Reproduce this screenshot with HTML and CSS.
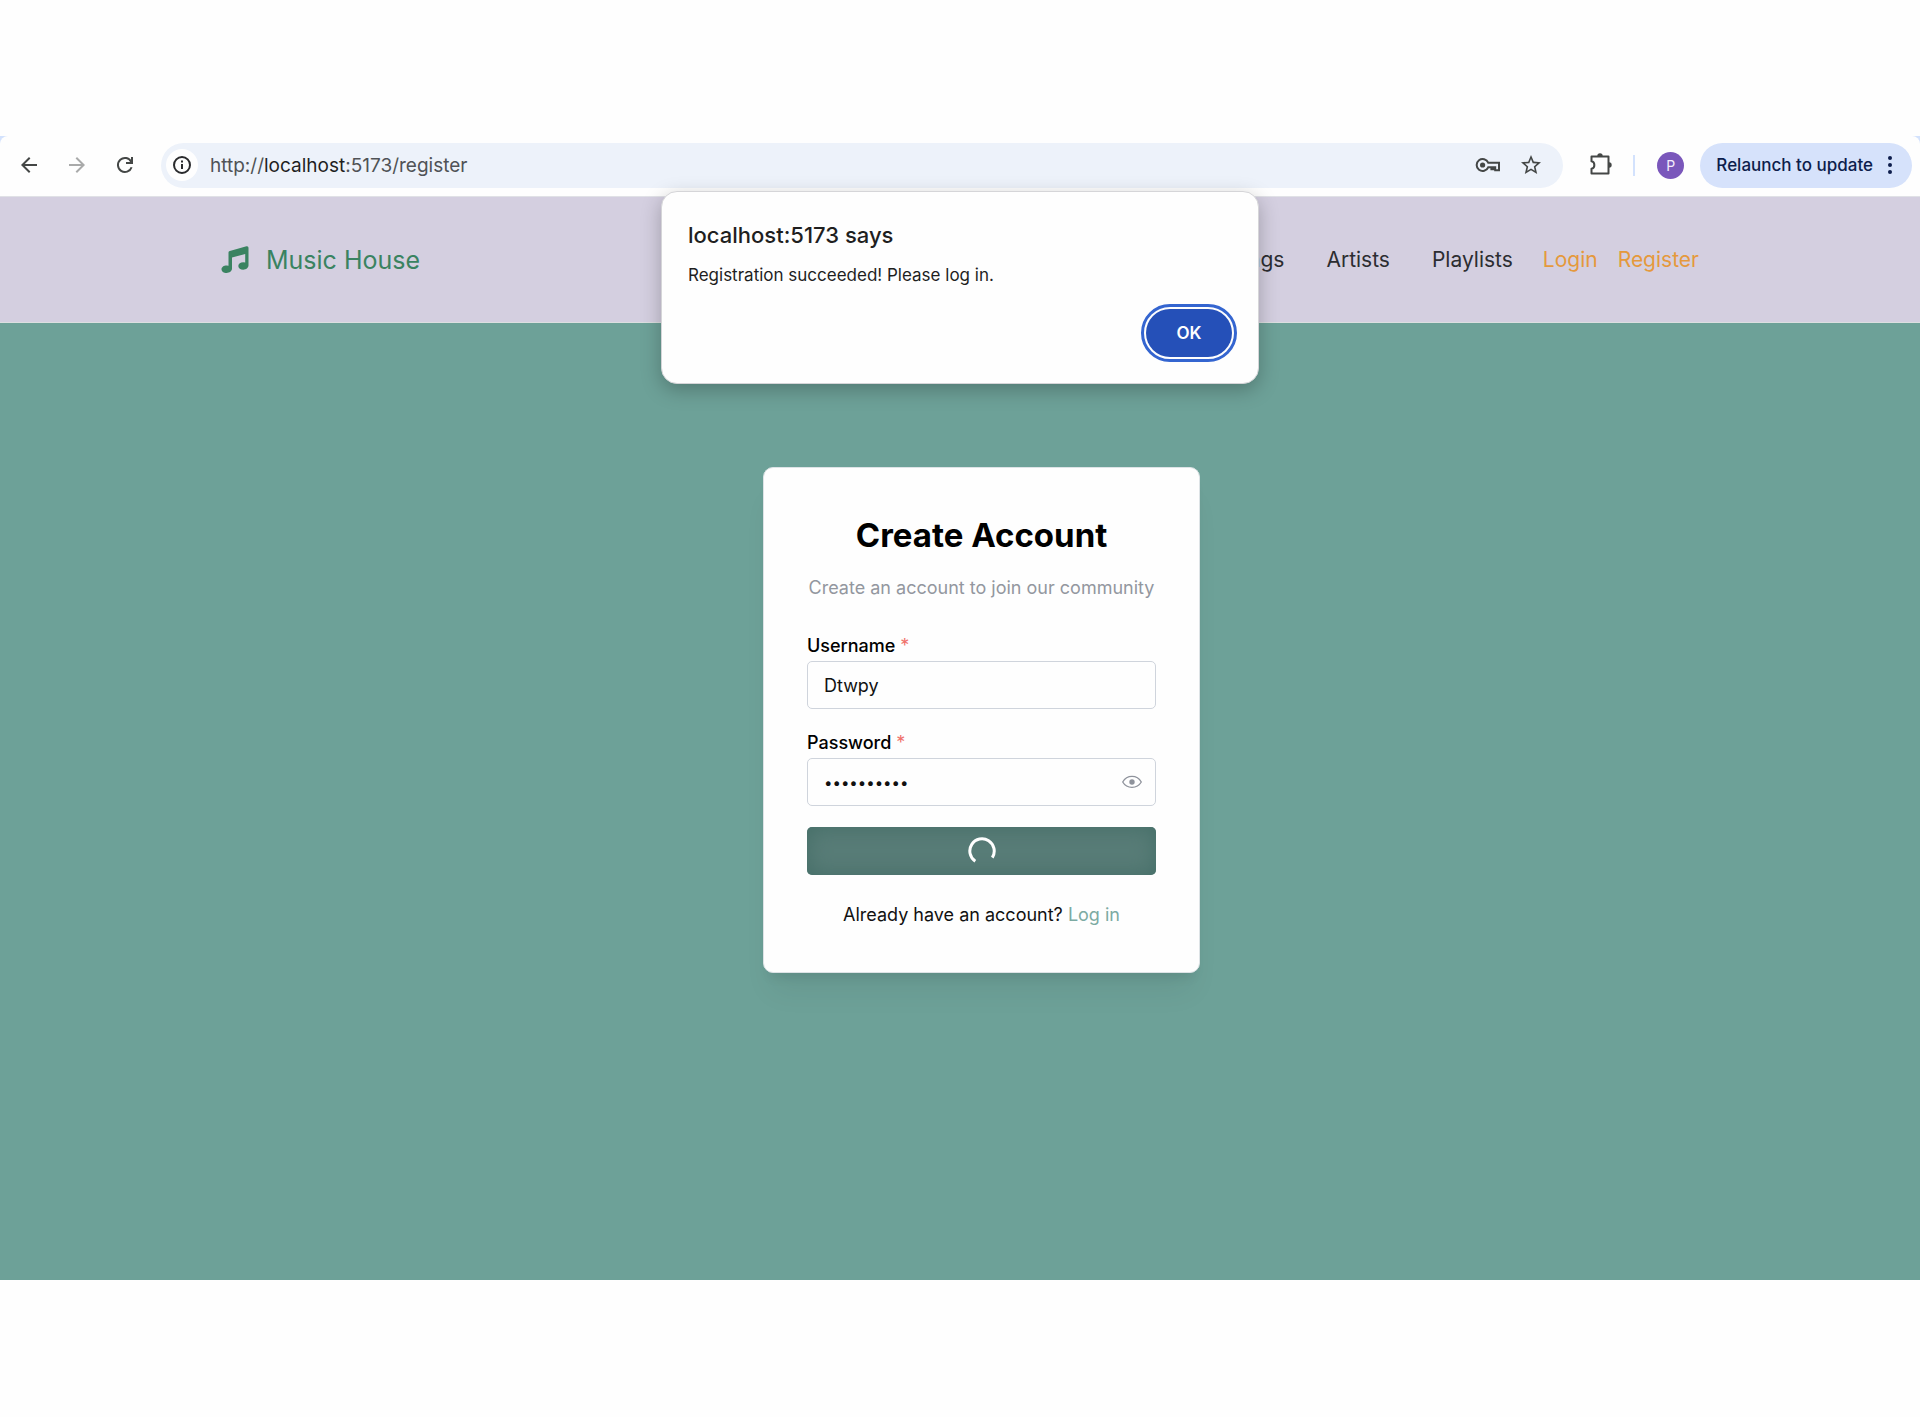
FILE: index.html
```html
<!DOCTYPE html>
<html lang="en">
<head>
    <meta charset="UTF-8">
    <meta name="viewport" content="width=device-width, initial-scale=1.0">
    <title>Register | Music House</title>
    <link rel="stylesheet" href="styles.css">
</head>
<body>

    <div class="browser">
        <!-- Browser toolbar -->
        <div class="toolbar">
            <button class="tool-btn" aria-label="Back">
                <svg width="24" height="24" viewBox="0 0 24 24" fill="currentColor"><path d="M20 11H7.83l5.59-5.59L12 4l-8 8 8 8 1.41-1.41L7.83 13H20v-2z"/></svg>
            </button>
            <button class="tool-btn forward" aria-label="Forward">
                <svg width="24" height="24" viewBox="0 0 24 24" fill="currentColor"><path d="M12 4l-1.41 1.41L16.17 11H4v2h12.17l-5.58 5.59L12 20l8-8z"/></svg>
            </button>
            <button class="tool-btn" aria-label="Reload">
                <svg width="24" height="24" viewBox="0 0 24 24" fill="none" stroke="currentColor" stroke-width="2"><path d="M18.6 14.2A7 7 0 1 1 18.2 8.8L19 10"/><path d="M19 4v6h-6"/></svg>
            </button>

            <div class="address">
                <button class="site-info" aria-label="Site information">
                    <svg width="20" height="20" viewBox="0 0 20 20" fill="none" stroke="currentColor" stroke-width="2"><circle cx="10" cy="10" r="8"/><path d="M10 9v5M10 5.6v2"/></svg>
                </button>
                <span class="url">http://<b>localhost</b>:5173/register</span>
                <button class="address-btn" aria-label="Passwords">
                    <svg width="26" height="18" viewBox="0 0 26 18" fill="none" stroke="currentColor" stroke-width="2"><path d="M13.2 6.7A6 6 0 1 0 13.2 11.3H16.4V13.2H18.4V11.3H20.2V14.3H24V6.7Z"/><circle cx="7.6" cy="9" r="2.6" fill="currentColor" stroke="none"/></svg>
                </button>
                <button class="address-btn" aria-label="Bookmark this tab">
                    <svg width="24" height="24" viewBox="0 0 24 24" fill="currentColor"><path d="M22 9.24l-7.19-.62L12 2 9.19 8.63 2 9.24l5.46 4.73L5.82 21 12 17.27 18.18 21l-1.63-7.03L22 9.24zM12 15.4l-3.76 2.27 1-4.28-3.32-2.88 4.38-.38L12 6.1l1.71 4.04 4.38.38-3.32 2.88 1 4.28L12 15.4z"/></svg>
                </button>
            </div>

            <button class="tool-btn extensions" aria-label="Extensions">
                <svg width="24" height="24" viewBox="0 0 24 24"><path d="M2.500 3.500H19.500V20.500H2.500V15.800C6.300 15.300 6.300 8.700 2.500 8.200Z" fill="none" stroke="currentColor" stroke-width="2" stroke-linejoin="round"/><path d="M8.300 3A2.700 2.700 0 0 1 13.700 3ZM20 9.300A2.700 2.700 0 0 1 20 14.700Z" fill="currentColor"/></svg>
            </button>
            <span class="divider"></span>
            <button class="profile" aria-label="Profile">P</button>
            <button class="relaunch">
                Relaunch to update
                <svg width="6" height="20" viewBox="0 0 6 20" fill="currentColor"><circle cx="3" cy="3" r="2"/><circle cx="3" cy="10" r="2"/><circle cx="3" cy="17" r="2"/></svg>
            </button>
        </div>

        <!-- Navbar -->
        <header class="navbar">
            <a href="#" class="brand">
                <svg width="28" height="28" viewBox="0 0 28 28" fill="currentColor"><path d="M25.500 0.300Q27.500 0 27.500 1.800V19.300C27.500 22 25 23.700 22.300 23.700C19.500 23.700 17.300 22.100 17.300 20C17.300 17.800 19.500 16.200 22.300 16.200Q23.300 16.200 24.200 16.500V8L11 11.600V22.600C11 25.300 8.500 27 5.600 27C2.800 27 .5 25.400 .5 23.200C.5 21 2.800 19.400 5.600 19.400Q6.700 19.400 7.500 19.700V6.600Q7.500 5.400 8.800 5Z"/></svg>
                <span>Music House</span>
            </a>
            <nav class="nav-links">
                <a href="#">Songs</a>
                <a href="#">Artists</a>
                <a href="#">Playlists</a>
            </nav>
            <div class="auth-links">
                <a href="#">Login</a>
                <a href="#">Register</a>
            </div>
        </header>

        <!-- Register form -->
        <main class="page">
            <form class="card">
                <h1>Create Account</h1>
                <p class="subtitle">Create an account to join our community</p>

                <label for="username">Username <span class="required">*</span></label>
                <div class="input-group">
                    <input type="text" id="username" value="Dtwpy">
                </div>

                <label for="password">Password <span class="required">*</span></label>
                <div class="input-group">
                    <input type="password" id="password" value="musichouse">
                    <button type="button" class="show-btn" aria-label="Show password">
                        <svg width="20" height="14" viewBox="0 0 20 14" fill="none" stroke="currentColor"><path d="M.7 7C5 -.5 15 -.5 19.300 7C15 14.200 5 14.200 .7 7Z" stroke-width="1.300"/><circle cx="10" cy="7" r="2.700" fill="currentColor" stroke="none"/></svg>
                    </button>
                </div>

                <button type="submit" class="submit-btn" aria-label="Registering" disabled>
                    <svg width="28" height="28" viewBox="0 0 28 28" fill="none" stroke="currentColor" stroke-width="3"><path d="M7.300 24.200A12.200 12.200 0 1 1 24.300 20.600"/></svg>
                </button>

                <p class="login">Already have an account? <a href="#">Log in</a></p>
            </form>
        </main>

        <!-- Alert over the page -->
        <div class="alert" role="alertdialog" aria-labelledby="alertTitle">
            <h2 id="alertTitle">localhost:5173 says</h2>
            <p>Registration succeeded! Please log in.</p>
            <button class="ok-btn">OK</button>
        </div>
    </div>

</body>
</html>
```
FILE: styles.css
```css
* {
    margin: 0;
    padding: 0;
    box-sizing: border-box;
    font-family: 'Inter', sans-serif;
}
body {
    padding: 136px 0;
    background: #fefefe;
}
a {
    text-decoration: none;
}
button {
    display: flex;
    align-items: center;
    justify-content: center;
    border: none;
    background: none;
    cursor: pointer;
}
svg {
    flex-shrink: 0;
}
.browser {
    position: relative;
    background: #d3e2fd;
}

/* Browser toolbar */
.toolbar {
    display: flex;
    align-items: center;
    height: 61px;
    padding: 0 8px 2px 17px;
    background: #fefefe;
    border-bottom: 1px solid #e0e1e6;
    border-radius: 8px 8px 0 0;
}
.tool-btn {
    width: 24px;
    height: 24px;
    margin-right: 24px;
    color: #444746;
}
.tool-btn.forward {
    color: #a9aaaa;
}
.address {
    flex: 1;
    display: flex;
    align-items: center;
    gap: 18px;
    height: 45px;
    padding: 0 20px 0 5px;
    margin-right: 26px;
    background: #edf2fa;
    border-radius: 24px;
}
.site-info {
    width: 32px;
    height: 32px;
    margin-right: -6px;
    background: #fefefe;
    color: #2a2b2d;
    border-radius: 50%;
}
.url {
    flex: 1;
    font-size: 19px;
    color: #505256;
}
.url b {
    font-weight: 400;
    color: #1f1f1f;
}
.address-btn {
    color: #444746;
}
.extensions {
    margin-right: 20px;
}
.divider {
    width: 2px;
    height: 21px;
    background: #d3e2fd;
}
.profile {
    width: 27px;
    height: 27px;
    margin: 0 16px 0 22px;
    background: #7a57bb;
    color: #f3edfb;
    font-size: 14px;
    border-radius: 50%;
}
.relaunch {
    gap: 14px;
    height: 45px;
    padding: 0 19px 0 16px;
    background: #d6e2fb;
    color: #0d1d4c;
    font-size: 17px;
    font-weight: 500;
    border-radius: 24px;
}

/* Navbar */
.navbar {
    display: flex;
    align-items: center;
    height: 126px;
    padding: 0 221px;
    background: #d4cfe0;
    border-bottom: 1px solid #dcdfe0;
}
.brand {
    display: flex;
    align-items: center;
    gap: 17px;
    color: #3a8361;
    font-size: 25px;
}
.nav-links {
    display: flex;
    gap: 42px;
    margin-left: auto;
    font-size: 21px;
}
.nav-links a {
    color: #2c2d31;
}
.auth-links {
    display: flex;
    gap: 20px;
    margin-left: 30px;
    font-size: 21px;
}
.auth-links a {
    color: #e5993c;
}

/* Register form */
.page {
    display: flex;
    justify-content: center;
    padding: 144px 0 307px 43px;
    background: #6da198;
}
.card {
    width: 437px;
    padding: 43px;
    background: #fefefe;
    border: 1px solid #dde3e6;
    border-radius: 10px;
    box-shadow: 0 26px 30px -8px rgba(0,0,0,0.06), 0 10px 12px -6px rgba(0,0,0,0.08);
}
.card h1 {
    font-size: 33px;
    font-weight: 700;
    line-height: 48px;
    text-align: center;
}
.subtitle {
    margin-top: 16px;
    margin-bottom: 32px;
    color: #93979f;
    font-size: 18px;
    line-height: 26px;
    text-align: center;
    white-space: nowrap;
}
.card label {
    display: block;
    font-size: 18px;
    font-weight: 500;
    line-height: 26px;
}
.required {
    color: #f0716b;
    font-weight: 400;
}
.input-group {
    position: relative;
    margin-top: 2px;
    margin-bottom: 21px;
}
.input-group input {
    display: block;
    width: 100%;
    height: 48px;
    padding: 0 16px;
    background: #fefefe;
    border: 1px solid #cfd4dc;
    border-radius: 5px;
    color: #111;
    font-size: 18px;
}
.input-group input[type="password"] {
    font-size: 15px;
}
.show-btn {
    position: absolute;
    top: 0;
    right: 14px;
    height: 48px;
    color: #8e929b;
}
.submit-btn {
    width: 100%;
    height: 48px;
    background: #587c77;
    color: #fefefe;
    border-radius: 5px;
    box-shadow: inset 0 0 22px #446e67;
}
.login {
    margin-top: 26px;
    color: #111;
    font-size: 18px;
    line-height: 28px;
    text-align: center;
}
.login a {
    color: #7caaa2;
}

/* Alert */
.alert {
    position: absolute;
    top: 55px;
    left: 50%;
    width: 598px;
    padding: 27px 26px 26px;
    background: #fefefe;
    border: 1px solid #d5d5d8;
    border-radius: 16px;
    box-shadow: 0 6px 20px rgba(0,0,0,0.25);
    transform: translateX(-50%);
}
.alert h2 {
    color: #1f1f1f;
    font-size: 22px;
    font-weight: 500;
    line-height: 32px;
}
.alert p {
    margin-top: 12px;
    color: #1f1f1f;
    font-size: 17px;
    line-height: 24px;
}
.ok-btn {
    width: 86px;
    height: 48px;
    margin: 22px 0 0 auto;
    background: #2550b8;
    color: #fefefe;
    font-size: 17px;
    font-weight: 600;
    border-radius: 24px;
    outline: 3px solid #3465d0;
    outline-offset: 2px;
}
```
